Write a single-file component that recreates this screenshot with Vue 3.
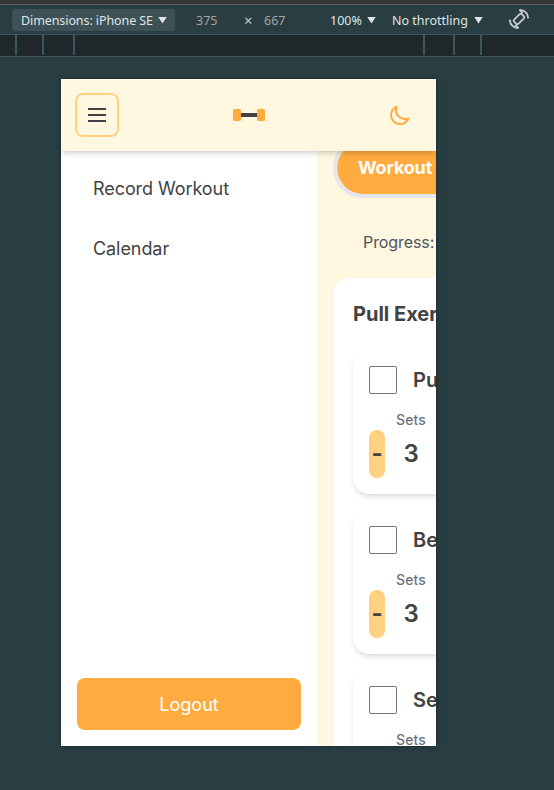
<script setup>
const links = ['Record Workout', 'Calendar']
const exercises = [
  { name: 'Pu', sets: 3 },
  { name: 'Be', sets: 3 },
  { name: 'Se', sets: 3 },
]
</script>

<template>
  <div class="devtools">
    <div class="strip"></div>
    <div class="toolbar">
      <div class="select dims"><span class="dims-label">Dimensions: iPhone SE</span><i class="arrow"></i></div>
      <span class="num w">375</span>
      <span class="times">×</span>
      <span class="num h">667</span>
      <div class="plain zoom"><span class="zoom-label">100%</span><i class="arrow"></i></div>
      <div class="plain throttle"><span class="throttle-label">No throttling</span><i class="arrow"></i></div>
      <svg class="rotate" width="22" height="22" viewBox="0 0 22 22" fill="none" stroke="#c3cbcd" stroke-width="1.8">
        <rect x="8" y="5.6" width="6" height="10.8" rx="1.8" transform="rotate(45 11 11)" />
        <path d="M11.500 1.900c5 .2 8.300 3.400 8.800 8.400M10.500 20.100c-5-.2-8.300-3.400-8.800-8.400" />
        <path d="M11.500 1.900l3.300 3.300M10.500 20.100l-3.300-3.300" />
      </svg>
    </div>
    <div class="ruler">
      <i></i><i></i><i></i><i></i><i></i><i></i>
    </div>
    <div class="stage">
      <div class="device">
        <header class="header">
          <button class="menu" aria-label="Menu"><b></b><b></b><b></b></button>
          <svg class="logo" width="32" height="12" viewBox="0 0 32 12">
            <rect x="7" y="4" width="18" height="4" fill="#424242" />
            <rect width="8" height="12" rx="1.5" fill="#ffab40" />
            <rect x="24" width="8" height="12" rx="1.5" fill="#ffab40" />
          </svg>
          <svg class="moon" width="24" height="24" viewBox="0 0 24 24" fill="none" stroke="#ffab40" stroke-width="2" stroke-linecap="round" stroke-linejoin="round">
            <path d="M20.354 15.354A9 9 0 0 1 8.646 3.646 9.003 9.003 0 0 0 12 21a9.003 9.003 0 0 0 8.354-5.646z" />
          </svg>
        </header>
        <div class="body">
          <nav class="sidebar">
            <a v-for="l in links" :key="l" class="link">{{ l }}</a>
            <button class="logout">Logout</button>
          </nav>
          <main class="main">
            <div class="pill">Workout</div>
            <p class="progress">Progress:</p>
            <section class="card">
              <h2>Pull Exer</h2>
              <article v-for="e in exercises" :key="e.name" class="exercise">
                <div class="row">
                  <span class="box"></span>
                  <h3>{{ e.name }}</h3>
                </div>
                <div class="sets">Sets</div>
                <div class="counter">
                  <span class="minus">-</span>
                  <span class="count">{{ e.sets }}</span>
                </div>
              </article>
            </section>
          </main>
        </div>
      </div>
    </div>
  </div>
</template>

<style>
body {
  background: #293e43;
}
</style>

<style scoped>
* {
  box-sizing: border-box;
}
.devtools {
  width: 554px;
  height: 790px;
  overflow: hidden;
  background: #293e43;
  display: flex;
  flex-direction: column;
  font-family: "Noto Sans", "Open Sans", sans-serif;
}
.strip {
  height: 5px;
  flex: none;
  background: #353535;
  border-bottom: 1px solid #5e5e5e;
}
.toolbar {
  height: 30px;
  flex: none;
  display: flex;
  align-items: center;
  padding-left: 12px;
  border-bottom: 1px solid #3d565d;
  color: #dfe5e6;
  font-size: 12.5px;
  white-space: nowrap;
}
.toolbar span {
  padding-top: 1px;
}
.select {
  display: flex;
  align-items: center;
  width: 163px;
  height: 22px;
  padding-left: 9px;
  border-radius: 4px;
  background: #3d5156;
}
.dims-label {
  width: 137px;
  letter-spacing: -0.09px;
}
.arrow {
  width: 9px;
  height: 7px;
  background: #dfe5e6;
  clip-path: polygon(0 0, 100% 0, 50% 100%);
  margin-top: 1px;
}
.num {
  width: 50px;
  height: 20px;
  padding-left: 8px;
  line-height: 20px;
  border-radius: 3px;
  background: #2b3d41;
  color: #9fa5a5;
}
.w {
  margin-left: 13px;
}
.times {
  width: 18px;
  padding-left: 6px;
  font-size: 15px;
  line-height: 20px;
  color: #c3cbcd;
}
.plain {
  display: flex;
  align-items: center;
}
.zoom {
  margin-left: 24px;
}
.zoom-label {
  width: 37px;
}
.throttle {
  margin-left: 16px;
}
.throttle-label {
  width: 82px;
}
.rotate {
  margin-left: 25px;
  margin-bottom: 1px;
}
.ruler {
  height: 22px;
  flex: none;
  display: flex;
  background: #1f272a;
  border-bottom: 1px solid #3d565d;
}
.ruler i {
  width: 2px;
  height: 20px;
  background: #3d565d;
  margin-left: 25px;
}
.ruler i:nth-child(1) {
  margin-left: 15px;
}
.ruler i:nth-child(3) {
  margin-left: 29px;
}
.ruler i:nth-child(4) {
  margin-left: 348px;
}
.ruler i:nth-child(5) {
  margin-left: 28px;
}
.stage {
  padding: 22px 0 0 61px;
}
.device {
  width: 375px;
  height: 667px;
  overflow: hidden;
  display: flex;
  flex-direction: column;
  background: #fff7e0;
  color: #424242;
  font-family: Inter, sans-serif;
  box-shadow: 0 0 5px rgba(0, 0, 0, 0.35);
}
.header {
  position: relative;
  z-index: 1;
  height: 72px;
  flex: none;
  display: flex;
  align-items: center;
  justify-content: space-between;
  padding: 0 24px 0 14px;
  background: #fff7e0;
  box-shadow: 0 4px 6px -1px rgba(0, 0, 0, 0.13), 0 2px 4px -2px rgba(0, 0, 0, 0.12);
}
.menu {
  width: 44px;
  height: 44px;
  padding: 0;
  display: flex;
  flex-direction: column;
  align-items: center;
  justify-content: center;
  gap: 4px;
  border: 2px solid #ffd180;
  border-radius: 8px;
  background: none;
}
.menu b {
  width: 18px;
  height: 2px;
  background: #424242;
}
.logo {
  margin-left: -10px;
}
.body {
  flex: 1;
  min-height: 0;
  display: flex;
}
.sidebar {
  width: 256px;
  flex: none;
  display: flex;
  flex-direction: column;
  padding: 8px 16px 16px;
  background: #fff;
}
.link {
  height: 60px;
  padding-left: 16px;
  line-height: 60px;
  font-size: 18px;
  letter-spacing: -0.07px;
}
.logout {
  height: 52px;
  margin-top: auto;
  padding: 0;
  border: 0;
  border-radius: 8px;
  background: #ffab40;
  color: #fff;
  font: 400 18px Inter, sans-serif;
}
.main {
  width: 343px;
  flex: none;
  margin-top: -13px;
  padding-left: 16px;
}
.pill {
  height: 60px;
  padding-left: 21px;
  border: 4px solid #e5e7eb;
  border-radius: 30px;
  background: #ffab40;
  background-clip: padding-box;
  color: #fff;
  font-size: 18px;
  font-weight: 700;
  line-height: 52px;
  letter-spacing: -0.18px;
}
.progress {
  margin: 32px 0 23px;
  padding-left: 30px;
  font-size: 16px;
  line-height: 25px;
  letter-spacing: -0.08px;
  color: #4b5563;
}
.card {
  padding: 20px;
  border-radius: 16px;
  background: #fff;
  box-shadow: 0 1px 3px rgba(0, 0, 0, 0.08);
}
h2 {
  margin: 0 0 20px;
  height: 32px;
  line-height: 32px;
  font-size: 20px;
  font-weight: 700;
}
.exercise {
  height: 144px;
  margin-bottom: 16px;
  padding: 16px;
  border-radius: 16px;
  background: #fff;
  box-shadow: 0 4px 6px -1px rgba(0, 0, 0, 0.1), 0 2px 4px -2px rgba(0, 0, 0, 0.1);
}
.row {
  display: flex;
  align-items: center;
  gap: 16px;
  height: 28px;
}
.box {
  width: 28px;
  height: 28px;
  border: 1px solid #767676;
  border-radius: 2px;
}
h3 {
  margin: 0;
  font-size: 20px;
  font-weight: 600;
  white-space: nowrap;
}
.sets {
  margin-top: 16px;
  padding-left: 27px;
  height: 20px;
  line-height: 20px;
  font-size: 14px;
  font-weight: 500;
  letter-spacing: 0.15px;
  color: #6b7280;
}
.counter {
  display: flex;
  align-items: center;
  height: 48px;
  font-size: 24px;
  font-weight: 600;
}
.minus {
  width: 16px;
  height: 48px;
  border-radius: 8px;
  background: #ffd180;
  line-height: 48px;
  text-align: center;
  font-size: 24px;
  font-weight: 700;
}
.count {
  margin-left: 18.5px;
  padding-bottom: 1px;
}
</style>
